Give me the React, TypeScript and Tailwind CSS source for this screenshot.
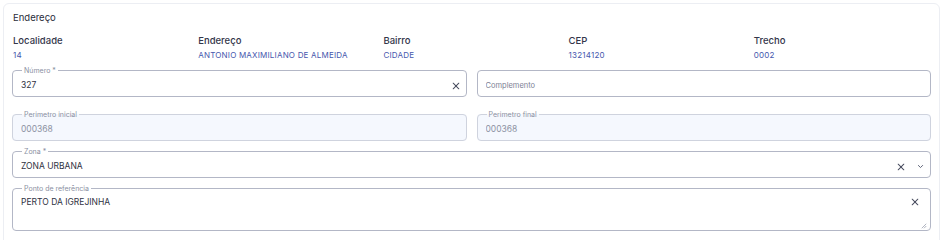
import React from 'react';

const X = ({ className = '' }: { className?: string }) => (
  <svg viewBox="0 0 10 10" className={className} fill="none" stroke="currentColor" strokeWidth="1.3" strokeLinecap="round">
    <path d="M1.5 1.5 L8.5 8.5 M8.5 1.5 L1.5 8.5" />
  </svg>
);

const Chevron = () => (
  <svg viewBox="0 0 10 10" className="w-[7px] h-[7px] text-[#5b6075]" fill="none" stroke="currentColor" strokeWidth="1.4" strokeLinecap="round" strokeLinejoin="round">
    <path d="M2 3.5 L5 6.5 L8 3.5" />
  </svg>
);

type FieldProps = {
  label?: string;
  value?: string;
  placeholder?: string;
  disabled?: boolean;
  clear?: boolean;
  select?: boolean;
  area?: boolean;
};

const Field = ({ label, value, placeholder, disabled, clear, select, area }: FieldProps) => (
  <fieldset
    className={`rounded-[4px] border pl-[8px] min-w-0 ${area ? 'pr-[11px]' : 'pr-[6px]'} ${
      disabled ? 'bg-[#f5f8fe] border-[#cfd3de]' : 'bg-white border-[#b3b7c6]'
    } ${label ? '' : 'pt-[4px]'}`}
  >
    {label && (
      <legend className="ml-[1px] px-[2px] text-[7px] leading-[9px] text-[#8b90a2]">{label}</legend>
    )}
    <div className={`flex ${area ? 'items-start h-[38px]' : 'items-center h-[21px]'}`}>
      <span
        className={`flex-1 truncate ${area ? 'pt-[3px]' : ''} ${
          placeholder ? 'text-[7.5px] text-[#7c8194]' : disabled ? 'text-[8.5px] text-[#8e93a4]' : 'text-[8.5px] text-[#2f3242]'
        }`}
      >
        {value || placeholder}
      </span>
      {clear && (
        <span className={`flex items-center gap-[12px] text-[#4a4e60] ${area ? 'pt-[5px]' : ''}`}>
          <X className="w-[8px] h-[8px]" />
          {select && <Chevron />}
        </span>
      )}
    </div>
    {area && (
      <div className="flex justify-end mt-[-8px] mb-[1px] mr-[-8px]">
        <svg viewBox="0 0 8 8" className="w-[6px] h-[6px] text-[#8b90a2]" stroke="currentColor" strokeWidth="0.9">
          <path d="M7 1 L1 7 M7 4 L4 7" />
        </svg>
      </div>
    )}
  </fieldset>
);

const info = [
  { label: 'Localidade', value: '14' },
  { label: 'Endereço', value: 'ANTONIO MAXIMILIANO DE ALMEIDA' },
  { label: 'Bairro', value: 'CIDADE' },
  { label: 'CEP', value: '13214120' },
  { label: 'Trecho', value: '0002' },
];

export default function App() {
  return (
    <div className="w-[943px] h-[240px] overflow-hidden bg-white px-[3px] pt-[3px] font-['Inter',sans-serif]">
      <div className="rounded-[6px] border border-[#eceef3] px-[8px] pt-[7px] pb-[16px]">
        <div className="text-[9.5px] leading-[14px] text-[#2a2d3a] pl-[1px]">Endereço</div>
        <div className="grid grid-cols-5 gap-x-[8px] mt-[10px] pl-[1px]">
          {info.map((i) => (
            <div key={i.label}>
              <div className="text-[9.5px] leading-[12px] font-medium text-[#33364a]">{i.label}</div>
              <div className="text-[8px] tracking-[0.2px] leading-[10px] mt-[3px] text-[#4657ad]">{i.value}</div>
            </div>
          ))}
        </div>
        <div className="flex flex-col gap-[6px] mt-[6px]">
          <div className="grid grid-cols-2 gap-x-[10px] items-end mb-[7px]">
            <Field label="Número *" value="327" clear />
            <Field placeholder="Complemento" />
          </div>
          <div className="grid grid-cols-2 gap-x-[10px]">
            <Field label="Perimetro inicial" value="000368" disabled />
            <Field label="Perimetro final" value="000368" disabled />
          </div>
          <Field label="Zona *" value="ZONA URBANA" clear select />
          <Field label="Ponto de referência" value="PERTO DA IGREJINHA" clear area />
        </div>
      </div>
    </div>
  );
}
